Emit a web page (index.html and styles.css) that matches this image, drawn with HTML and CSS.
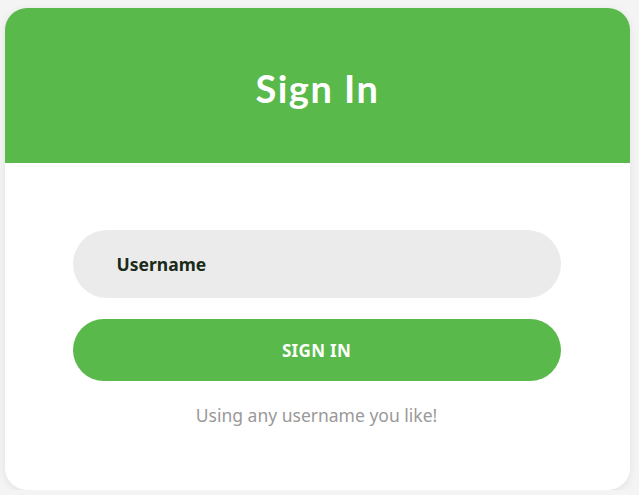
FILE: index.html
```html
<!DOCTYPE html>
<html>
<head>
<meta charset="utf-8">
<link rel="stylesheet" href="styles.css">
</head>
<body>
<div class="card">
  <div class="header"><h1 class="title">Sign In</h1></div>
  <div class="content">
    <div class="input">Username</div>
    <button class="btn">SIGN IN</button>
    <p class="hint">Using any username you like!</p>
  </div>
</div>
</body>
</html>
```
FILE: styles.css
```css
html, body { margin: 0; padding: 0; }
body {
  background: #f4f4f4;
  padding: 8px 9px 0 5px;
  font-family: "Noto Sans", "Open Sans", sans-serif;
}
.card {
  width: 625px;
  height: 482px;
  background: #fff;
  border-radius: 22px;
  overflow: hidden;
  box-shadow: 0 2px 8px rgba(0,0,0,0.08);
}
.header {
  height: 155px;
  background: #59b94a;
  display: flex;
  align-items: center;
  justify-content: center;
}
.title {
  margin: 0;
  color: #fff;
  font-family: "Lato", sans-serif;
  font-weight: 700;
  font-size: 38px;
  letter-spacing: 1.5px;
  padding-top: 4px;
}
.content {
  display: flex;
  flex-direction: column;
  align-items: center;
  padding-top: 67px;
  padding-right: 2px;
}
.input {
  box-sizing: border-box;
  width: 488px;
  height: 68px;
  border-radius: 34px;
  background: #ebebeb;
  padding-left: 44px;
  display: flex;
  align-items: center;
  font-weight: 700;
  font-size: 17.5px;
  color: #1a2a18;
}
.btn {
  margin-top: 21px;
  width: 488px;
  height: 62px;
  border: none;
  border-radius: 31px;
  background: #59b94a;
  color: #fff;
  font-family: inherit;
  font-weight: 700;
  font-size: 17px;
  letter-spacing: 0.3px;
}
.hint {
  margin: 22px 0 0;
  color: #999;
  font-size: 17.5px;
}
```
